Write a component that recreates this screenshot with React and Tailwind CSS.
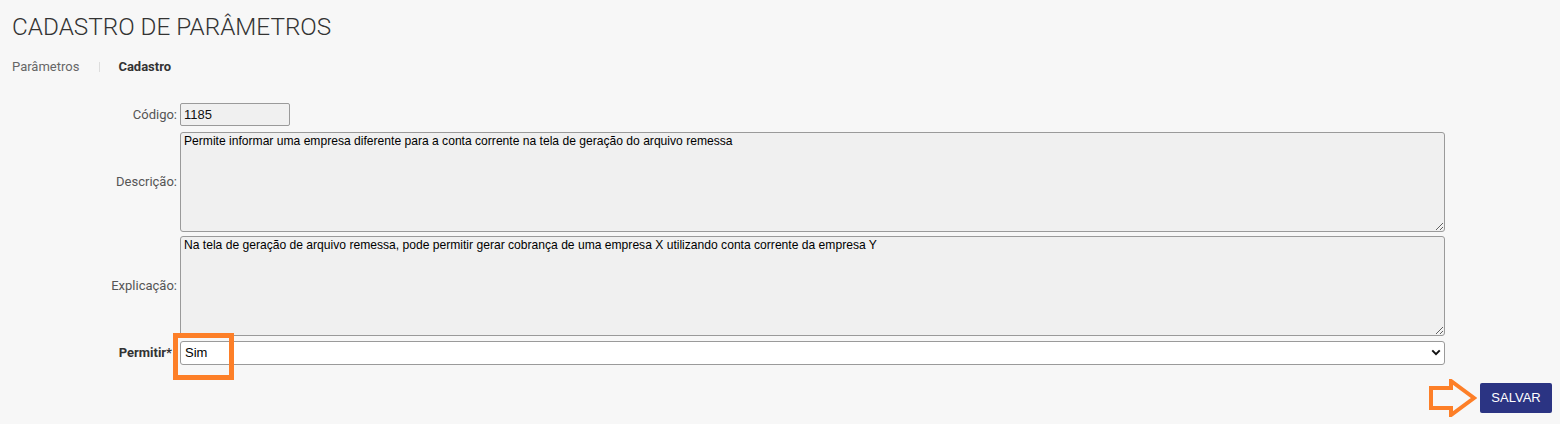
import React from 'react'

function Row({ label, bold, children, className = '' }) {
  return (
    <div className={`flex items-center ${className}`}>
      <label
        className={`w-[165px] mr-[3px] shrink-0 text-right text-[13px] ${
          bold ? 'pr-[5px] text-[13.5px] font-bold text-[#333]' : 'text-[#555]'
        }`}
      >
        {label}
      </label>
      {children}
    </div>
  )
}

export default function App() {
  return (
    <div className="min-h-screen bg-[#f7f7f7] px-3 pt-[13px] font-['Roboto',sans-serif]">
      <h1 className="text-[24.3px] leading-[28px] font-light text-[#333]">
        CADASTRO DE PARÂMETROS
      </h1>

      <nav className="mt-[16px] flex items-center text-[13px] leading-[20px]">
        <span className="text-[#666]">Parâmetros</span>
        <span className="ml-[20px] mr-[18px] h-[10px] w-px bg-[#ddd]" />
        <span className="font-bold text-[#333]">Cadastro</span>
      </nav>

      <form className="mt-[26px] w-[1433px]">
        <Row label="Código:">
          <input
            readOnly
            value="1185"
            className="h-[23px] w-[110px] rounded-[2px] border border-[#9a9a9a] bg-[#f0f0f0] px-[3px] text-[13px] text-[#111] font-['Liberation_Sans',Arial,sans-serif] outline-none"
          />
        </Row>

        <Row label="Descrição:" className="mt-[6px]">
          <textarea
            readOnly
            value="Permite informar uma empresa diferente para a conta corrente na tela de geração do arquivo remessa"
            className="h-[100px] flex-1 rounded-[3px] border border-[#9a9a9a] bg-[#f0f0f0] px-[3px] py-[1px] text-[12.1px] leading-[14px] text-black font-['Liberation_Sans',Arial,sans-serif] outline-none"
          />
        </Row>

        <Row label="Explicação:" className="mt-[4px]">
          <textarea
            readOnly
            value="Na tela de geração de arquivo remessa, pode permitir gerar cobrança de uma empresa X utilizando conta corrente da empresa Y"
            className="h-[100px] flex-1 rounded-[3px] border border-[#9a9a9a] bg-[#f0f0f0] px-[3px] py-[1px] text-[12.1px] leading-[14px] text-black font-['Liberation_Sans',Arial,sans-serif] outline-none"
          />
        </Row>

        <Row label="Permitir*" bold className="mt-[4px]">
          <div className="relative flex-1">
            <select
              defaultValue="Sim"
              className="h-[24px] w-full appearance-none rounded-[3px] border border-[#9a9a9a] bg-white pl-[4px] text-[13px] text-black font-['Liberation_Sans',Arial,sans-serif] outline-none"
            >
              <option>Sim</option>
              <option>Não</option>
            </select>
            <svg
              viewBox="0 0 12 8"
              className="pointer-events-none absolute right-[4px] top-[9px] h-[7px] w-[10px]"
              aria-hidden="true"
            >
              <path d="M1.5 1.5 6 6l4.5-4.5" fill="none" stroke="#111" strokeWidth="2.4" />
            </svg>
            <div className="pointer-events-none absolute left-[-7px] top-[-7px] h-[47px] w-[61px] border-[5px] border-[#fd7f28]" />
          </div>
        </Row>
      </form>

      <div className="mt-[14px] mr-[-4px] flex items-center justify-end">
        <svg viewBox="0 0 48 38" className="mr-[3px] h-[38px] w-[48px]" aria-hidden="true">
          <polygon
            points="2,9 22,9 22,2 45,19 22,36 22,29 2,29"
            fill="none"
            stroke="#fd7f28"
            strokeWidth="4"
            strokeLinejoin="miter"
          />
        </svg>
        <button
          type="button"
          className="h-[30px] w-[72px] rounded-[2px] bg-[#2b3483] text-[13px] text-white font-['Liberation_Sans',Arial,sans-serif]"
        >
          SALVAR
        </button>
      </div>
    </div>
  )
}
